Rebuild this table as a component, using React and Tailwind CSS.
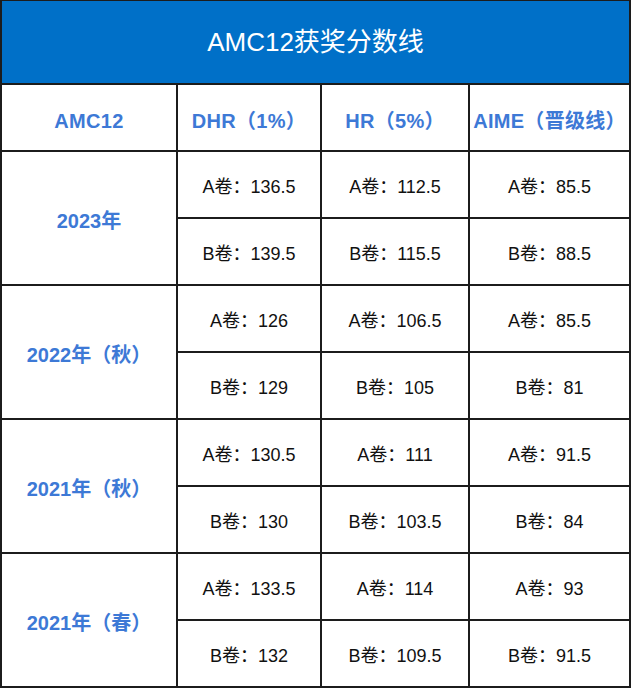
import { Fragment } from 'react';

const FONT = "font-['Liberation_Sans','Noto_Sans_CJK_SC',sans-serif]";

const groups = [
  {
    year: '2023年',
    rows: [
      ['A卷：136.5', 'A卷：112.5', 'A卷：85.5'],
      ['B卷：139.5', 'B卷：115.5', 'B卷：88.5'],
    ],
  },
  {
    year: '2022年（秋）',
    rows: [
      ['A卷：126', 'A卷：106.5', 'A卷：85.5'],
      ['B卷：129', 'B卷：105', 'B卷：81'],
    ],
  },
  {
    year: '2021年（秋）',
    rows: [
      ['A卷：130.5', 'A卷：111', 'A卷：91.5'],
      ['B卷：130', 'B卷：103.5', 'B卷：84'],
    ],
  },
  {
    year: '2021年（春）',
    rows: [
      ['A卷：133.5', 'A卷：114', 'A卷：93'],
      ['B卷：132', 'B卷：109.5', 'B卷：91.5'],
    ],
  },
];

const headers = ['AMC12', 'DHR（1%）', 'HR（5%）', 'AIME（晋级线）'];

const Cell = ({ children, className = '' }) => (
  <div className={`bg-white flex items-center justify-center pt-[6px] ${className}`}>{children}</div>
);

export default function App() {
  return (
    <div className={`w-[631px] h-[688px] bg-[#1c1c1c] p-[2px] ${FONT}`}>
      <div className="grid grid-cols-[174px_142px_146px_159px] grid-rows-[81px_repeat(9,65px)] gap-[2px] h-full">
        {/* Title */}
        <div className="col-span-4 bg-[#0070c8] flex items-center justify-center text-white text-[26px] -mt-[1px]">
          AMC12获奖分数线
        </div>

        {/* Header */}
        {headers.map((h) => (
          <Cell key={h} className="text-[#3d79d6] text-[20px] font-bold tracking-[0.3px]">
            {h}
          </Cell>
        ))}

        {/* Body */}
        {groups.map((g) => (
          <Fragment key={g.year}>
            <Cell className="row-span-2 text-[#3d79d6] text-[20px] font-bold">
              {g.year}
            </Cell>
            {g.rows[0].map((v, i) => (
              <Cell key={`a${i}`} className="text-[#111] text-[18px]">{v}</Cell>
            ))}
            {g.rows[1].map((v, i) => (
              <Cell key={`b${i}`} className="text-[#111] text-[18px]">{v}</Cell>
            ))}
          </Fragment>
        ))}
      </div>
    </div>
  );
}
